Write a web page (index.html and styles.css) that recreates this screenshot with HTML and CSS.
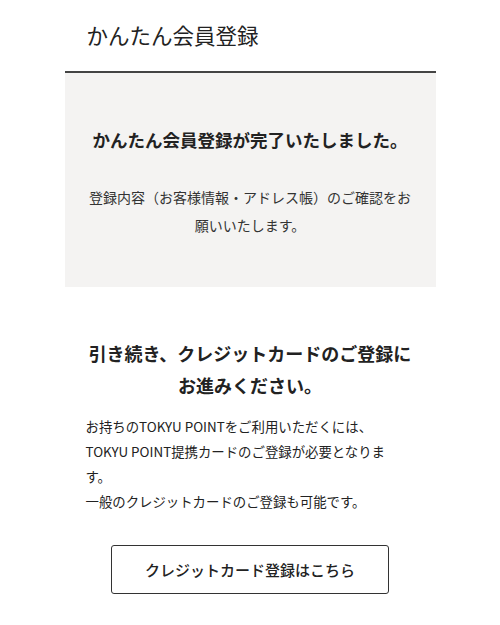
FILE: index.html
```html
<!DOCTYPE html>
<html lang="ja">
<head>
	<meta charset="utf-8">
	<title>かんたん会員登録</title>
	<meta name="viewport" content="width=device-width, initial-scale=1.0">
	<link rel="stylesheet" href="styles.css">
</head>
<body>
	<div class="page">
		<header class="page-header">
			<h1>かんたん会員登録</h1>
		</header>
		<section class="complete">
			<h2>かんたん会員登録が完了いたしました。</h2>
			<p>登録内容（お客様情報・アドレス帳）のご確認をお願いいたします。</p>
		</section>
		<section class="next">
			<h2>引き続き、クレジットカードのご登録に<br>お進みください。</h2>
			<p>お持ちのTOKYU POINTをご利用いただくには、<br>TOKYU POINT提携カードのご登録が必要となります。<br>一般のクレジットカードのご登録も可能です。</p>
			<div class="actions">
				<a class="button" href="#">クレジットカード登録はこちら</a>
			</div>
		</section>
	</div>
</body>
</html>
```

FILE: styles.css
```css
body{
	margin: 0;
	background: #fff;
	color: #222;
	font-family: "Noto Sans CJK JP", "Noto Sans", sans-serif;
}

.page{
	width: 371px;
	margin: 0 auto;
}

.page-header{
	padding: 19px 22px 20px;
	border-bottom: 2px solid #444;
}

.page-header h1{
	margin: 0;
	font-size: 21.5px;
	font-weight: 400;
	line-height: 32px;
}

.complete{
	background: #f4f3f2;
	padding: 54px 20px 48px;
	text-align: center;
}

.complete h2{
	margin: 0;
	font-size: 17.5px;
	font-weight: 700;
	line-height: 26px;
}

.complete p{
	margin: 30px 0 0;
	font-size: 14px;
	line-height: 28px;
	color: #333;
}

.next{
	padding: 50px 21px 30px;
}

.next h2{
	margin: 0;
	font-size: 18px;
	font-weight: 700;
	line-height: 32px;
	text-align: center;
}

.next p{
	margin: 13px 0 0;
	padding-right: 5px;
	font-size: 13.4px;
	line-height: 25px;
}

.actions{
	display: flex;
	justify-content: center;
	margin-top: 31px;
}

.button{
	display: flex;
	align-items: center;
	justify-content: center;
	box-sizing: border-box;
	width: 278px;
	height: 49px;
	border: 1px solid #333;
	border-radius: 3px;
	color: #222;
	font-size: 15px;
	font-weight: 500;
	text-decoration: none;
}
```
